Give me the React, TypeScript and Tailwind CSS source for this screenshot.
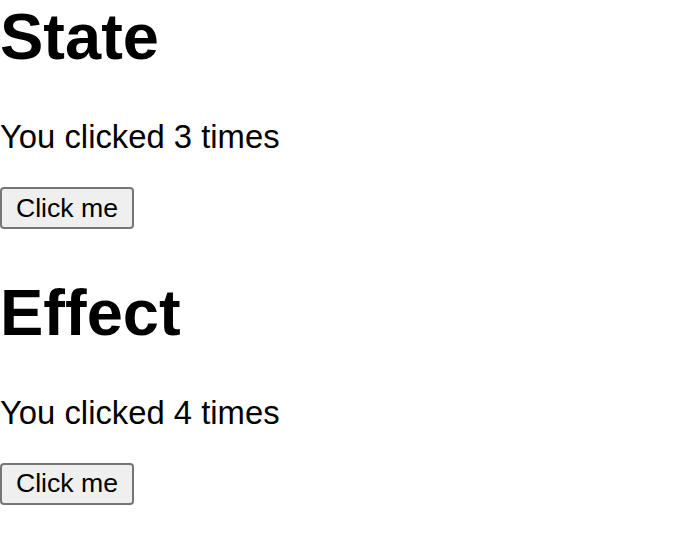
import React from 'react'

function Counter({title, initial, className}: {title: string; initial: number; className?: string}) {
  const [count, setCount] = React.useState(initial)

  return (
    <section className={className}>
      <h1 className="text-[65px] font-bold leading-[74px]">{title}</h1>
      <p className="mt-[44px] text-[32.8px] leading-[37px]">You clicked {count} times</p>
      <div className="mt-[32px] leading-[37px]">
        <button
          onClick={() => setCount(count + 1)}
          className="h-[42px] w-[134px] rounded-[4px] border-2 border-[#767676] bg-[#efefef] text-[26.67px] leading-[31px] text-black">
          Click me
        </button>
      </div>
    </section>
  )
}

export default function App() {
  return (
    <div className="bg-white text-black" style={{fontFamily: '"Liberation Sans", Arial, sans-serif'}}>
      <div className="flex flex-col">
        <Counter title="State" initial={3} />
        <Counter title="Effect" initial={4} className="mt-[46px]" />
      </div>
    </div>
  )
}
